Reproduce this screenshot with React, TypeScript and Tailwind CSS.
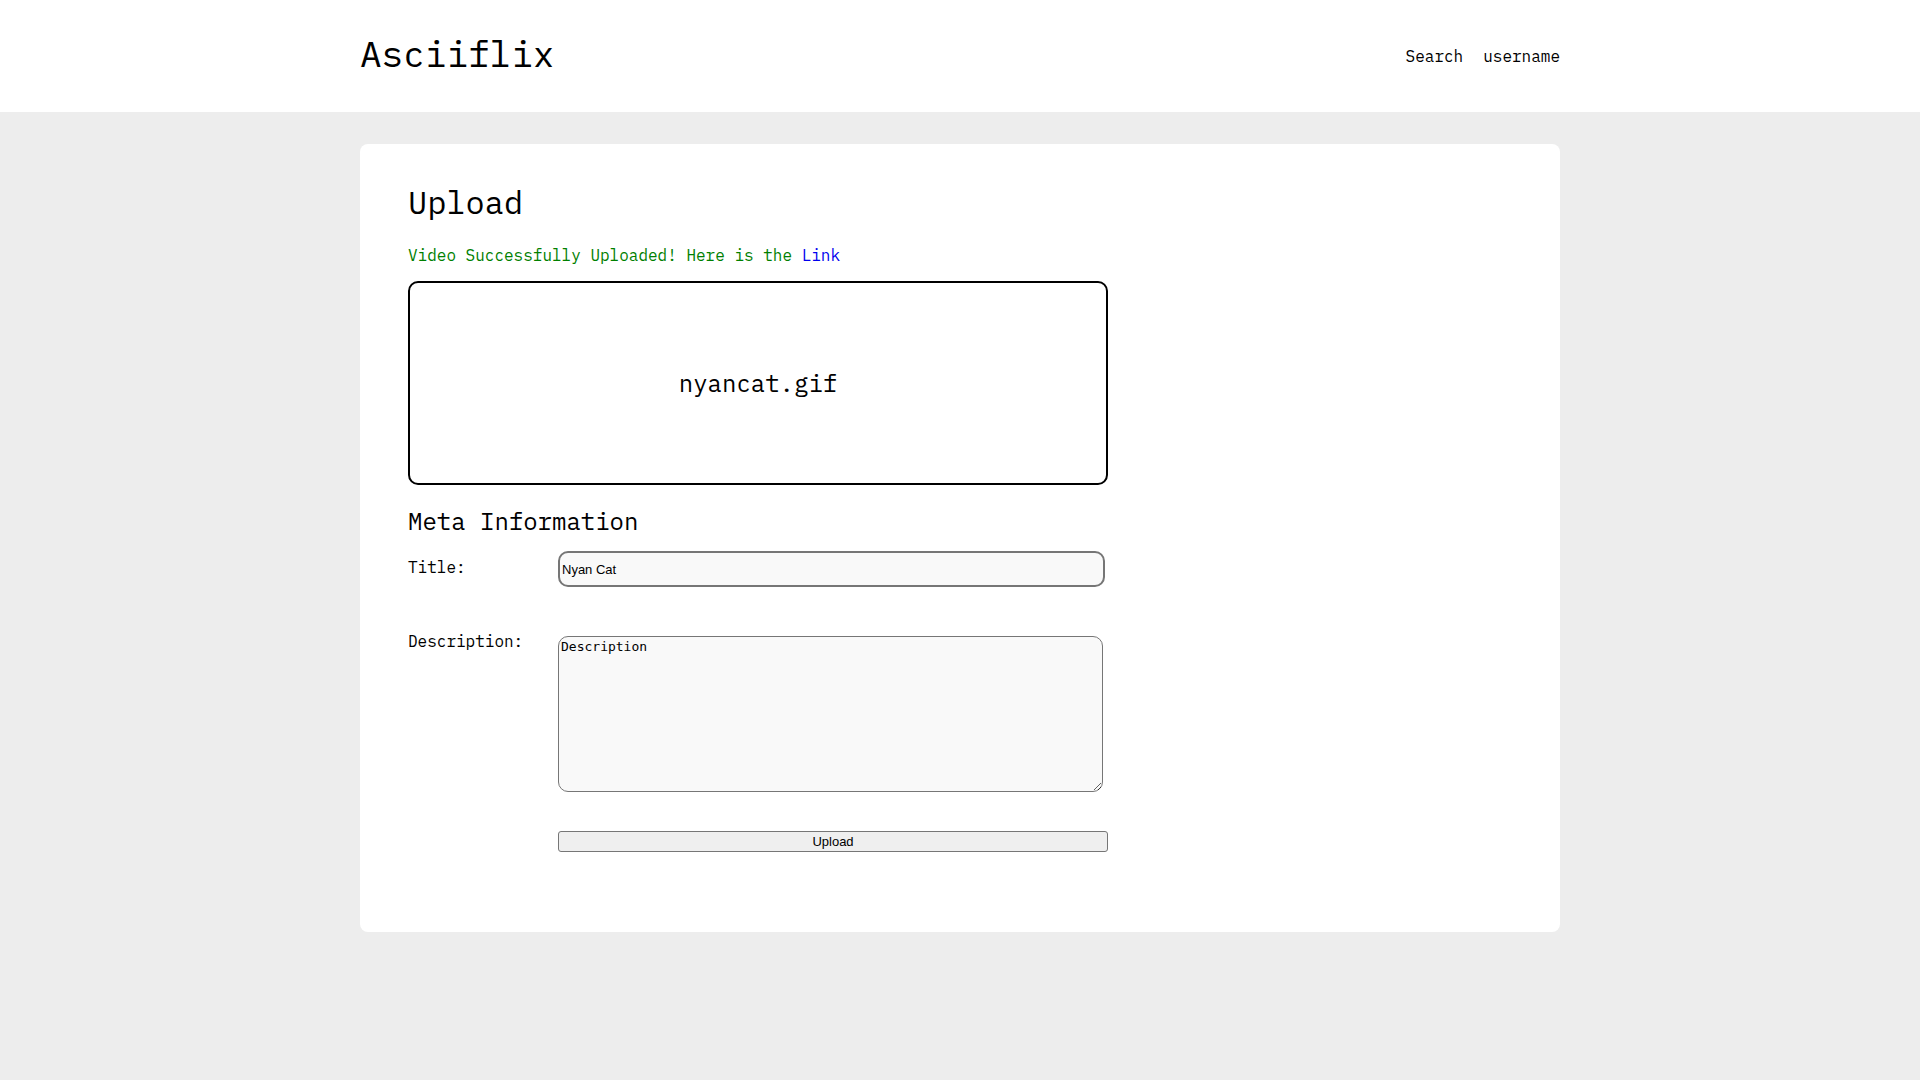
import React from "react";

function Header() {
  return (
    <header className="bg-white">
      <div className="mx-auto flex h-28 max-w-[1200px] items-center justify-between">
        <a href="#" className="pb-1 text-4xl leading-10">
          Asciiflix
        </a>
        <nav className="flex gap-5">
          <a href="#search">Search</a>
          <a href="#user">username</a>
        </nav>
      </div>
    </header>
  );
}

function UploadForm() {
  return (
    <form className="max-w-[700px]" onSubmit={(e) => e.preventDefault()}>
      <div className="mt-3.5 flex h-[204px] items-center justify-center rounded-[10px] border-2 border-black text-2xl">
        nyancat.gif
      </div>
      <h2 className="mt-5 text-2xl">Meta Information</h2>
      <div className="mt-3 grid grid-cols-[150px_1fr]">
        <label htmlFor="title" className="pt-1.5">
          Title:
        </label>
        <div className="pt-0.5 pr-[3px]">
          <input
            id="title"
            type="text"
            defaultValue="Nyan Cat"
            className="block h-9 w-full rounded-[10px] border-2 border-[#767676] bg-[#f9f9f9] px-0.5 font-['Liberation_Sans',sans-serif] text-[13px]"
          />
        </div>
        <label htmlFor="description" className="pt-[42px]">
          Description:
        </label>
        <div className="pt-[49px] pr-[5px]">
          <textarea
            id="description"
            defaultValue="Description"
            className="block h-[156px] w-full resize rounded-[10px] border border-[#767676] bg-[#f9f9f9] px-0.5 py-0.5 font-['DejaVu_Sans_Mono',monospace] text-[13px] leading-4"
          />
        </div>
        <button
          type="submit"
          className="col-start-2 mt-[39px] h-[21px] rounded-[3px] border border-[#767676] bg-[#efefef] font-['Liberation_Sans',sans-serif] text-[13px] leading-4"
        >
          Upload
        </button>
      </div>
    </form>
  );
}

export default function App() {
  return (
    <div className="min-h-screen bg-[#ededed] pb-8 font-['IBM_Plex_Mono','Liberation_Mono',monospace] text-base text-black">
      <Header />
      <main className="mx-auto mt-8 max-w-[1200px] rounded-lg bg-white px-12 pt-[38px] pb-20">
        <h1 className="text-[32px] leading-10">Upload</h1>
        <p className="mt-[21px] text-[#008000]">
          Video Successfully Uploaded! Here is the{" "}
          <a href="#video" className="text-[#0000ee]">
            Link
          </a>
        </p>
        <UploadForm />
      </main>
    </div>
  );
}
